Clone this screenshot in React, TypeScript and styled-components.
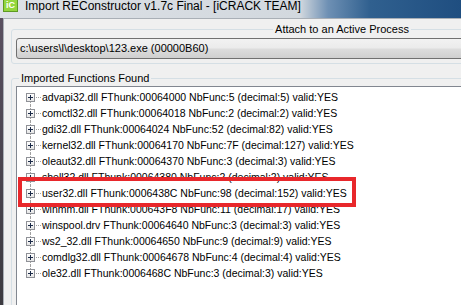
import React from 'react';
import styled, { createGlobalStyle } from 'styled-components';

const Global = createGlobalStyle`
  html, body { margin: 0; padding: 0; background: #48434d; }
  body { width: 461px; height: 305px; overflow: hidden; }
`;

const Window = styled.div`
  width: 461px;
  height: 305px;
  display: flex;
  flex-direction: column;
  overflow: hidden;
  font-family: Tahoma, "Liberation Sans", sans-serif;
`;

const TitleBar = styled.div`
  height: 18px;
  flex: none;
  display: flex;
  align-items: flex-start;
  padding-left: 3px;
  background: linear-gradient(to right, #dde1e6 0px, #d2d8de 300px, #6e90b4 328px, #30608f 370px, #1f4e80 461px);
`;

const AppIcon = styled.div`
  width: 13px;
  height: 10px;
  flex: none;
  background: #94d63e;
  border: 1px solid #5d9a22;
  border-top: none;
  color: #ffffff;
  font: bold 9px/9px "Liberation Sans", sans-serif;
  display: flex;
  align-items: flex-start;
  justify-content: center;
  padding-top: 1px;
`;

const TitleText = styled.div`
  margin-left: 7px;
  font: 12px/12px "Liberation Sans", sans-serif;
  color: #000;
  white-space: nowrap;
`;

const Body = styled.div`
  flex: 1;
  display: flex;
  min-height: 0;
`;

const FrameEdge = styled.div`
  width: 3px;
  flex: none;
  background: linear-gradient(#5a5060, #3c3a40);
`;

const Client = styled.div`
  flex: none;
  width: 690px;
  background: #f0f0f0;
  border-top: 1px solid #a9afb6;
  border-left: 1px solid #a9afb6;
  padding: 0 0 0 7px;
  display: flex;
  flex-direction: column;
`;

const Group = styled.fieldset<{ $top: number }>`
  margin: ${p => p.$top}px 0 0 0;
  padding: 0 4px 4px 4px;
  border: 1px solid #d5dfe5;
  border-radius: 3px;
  width: 662px;
  box-sizing: border-box;
  min-width: 0;
`;

const Legend = styled.legend<{ $center?: boolean }>`
  font-size: 11px;
  line-height: 13px;
  color: #000;
  padding: 0 2px;
  margin: ${p => (p.$center ? '0 auto' : '0 0 0 3px')};
`;

const Combo = styled.div`
  margin-top: 2px;
  height: 21px;
  box-sizing: border-box;
  border: 1px solid #707070;
  border-radius: 3px;
  background: linear-gradient(#f2f2f2 0%, #ebebeb 48%, #dddddd 52%, #cfcfcf 100%);
  font-size: 11px;
  line-height: 19px;
  padding-left: 3px;
  color: #000;
  white-space: nowrap;
`;

const TreeBox = styled.div`
  margin-top: 1px;
  height: 260px;
  background: #fff;
  border: 1px solid #828790;
  padding-top: 2px;
`;

const Row = styled.div<{ $first?: boolean; $last?: boolean }>`
  position: relative;
  height: 16px;
  display: flex;
  align-items: center;
  padding-left: 9px;
  font-size: 10.5px;
  color: #000;
  white-space: nowrap;
  &::before {
    content: '';
    position: absolute;
    left: 13px;
    top: ${p => (p.$first ? '8px' : '0')};
    bottom: ${p => (p.$last ? '8px' : '0')};
    border-left: 1px dotted #a0a0a0;
  }
`;

const Expander = styled.span`
  position: relative;
  z-index: 1;
  width: 9px;
  height: 9px;
  box-sizing: border-box;
  flex: none;
  border: 1px solid #8f9197;
  background: linear-gradient(#ffffff, #e6e6e6);
  &::before {
    content: '';
    position: absolute;
    left: 1px;
    top: 3px;
    width: 5px;
    height: 1px;
    background: #1b2a48;
  }
  &::after {
    content: '';
    position: absolute;
    left: 3px;
    top: 1px;
    width: 1px;
    height: 5px;
    background: #1b2a48;
  }
`;

const HLine = styled.span`
  width: 5px;
  margin-left: 1px;
  border-top: 1px dotted #a0a0a0;
  flex: none;
`;

const Label = styled.span`
  margin-left: 1px;
`;

const Highlight = styled.div`
  position: absolute;
  z-index: 2;
  left: 1px;
  top: -8px;
  width: 338px;
  height: 30px;
  box-sizing: border-box;
  border: 4px solid #e8272b;
`;

const items = [
  'advapi32.dll FThunk:00064000 NbFunc:5 (decimal:5) valid:YES',
  'comctl32.dll FThunk:00064018 NbFunc:2 (decimal:2) valid:YES',
  'gdi32.dll FThunk:00064024 NbFunc:52 (decimal:82) valid:YES',
  'kernel32.dll FThunk:00064170 NbFunc:7F (decimal:127) valid:YES',
  'oleaut32.dll FThunk:00064370 NbFunc:3 (decimal:3) valid:YES',
  'shell32.dll FThunk:00064380 NbFunc:2 (decimal:2) valid:YES',
  'user32.dll FThunk:0006438C NbFunc:98 (decimal:152) valid:YES',
  'winmm.dll FThunk:000643F8 NbFunc:11 (decimal:17) valid:YES',
  'winspool.drv FThunk:00064640 NbFunc:3 (decimal:3) valid:YES',
  'ws2_32.dll FThunk:00064650 NbFunc:9 (decimal:9) valid:YES',
  'comdlg32.dll FThunk:00064678 NbFunc:4 (decimal:4) valid:YES',
  'ole32.dll FThunk:0006468C NbFunc:3 (decimal:3) valid:YES',
];

export default function App() {
  return (
    <Window>
      <Global />
      <TitleBar>
        <AppIcon>iC</AppIcon>
        <TitleText>Import REConstructor v1.7c Final - [iCRACK TEAM]</TitleText>
      </TitleBar>
      <Body>
        <FrameEdge />
        <Client>
          <Group $top={4}>
            <Legend $center>Attach to an Active Process</Legend>
            <Combo>c:\users\l\desktop\123.exe (00000B60)</Combo>
          </Group>
          <Group $top={8}>
            <Legend>Imported Functions Found</Legend>
            <TreeBox>
              {items.map((t, i) => (
                <Row key={t} $first={i === 0} $last={i === items.length - 1}>
                  <Expander />
                  <HLine />
                  <Label>{t}</Label>
                  {i === 6 && <Highlight />}
                </Row>
              ))}
            </TreeBox>
          </Group>
        </Client>
      </Body>
    </Window>
  );
}
